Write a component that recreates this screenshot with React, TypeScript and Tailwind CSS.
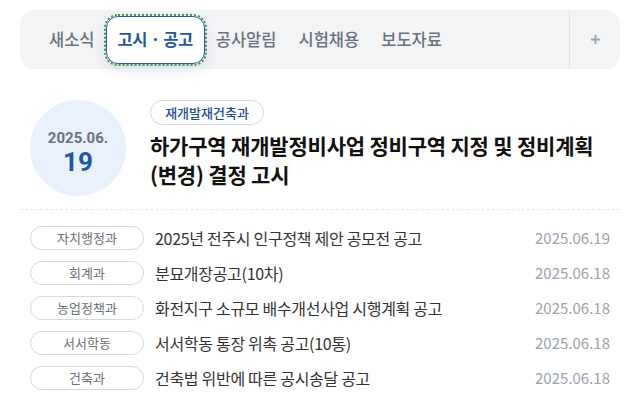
import { Plus } from "lucide-react";

const tabs = ["새소식", "고시 · 공고", "공사알림", "시험채용", "보도자료"];

const rows = [
  { dept: "자치행정과", title: "2025년 전주시 인구정책 제안 공모전 공고", date: "2025.06.19" },
  { dept: "회계과", title: "분묘개장공고(10차)", date: "2025.06.18" },
  { dept: "농업정책과", title: "화전지구 소규모 배수개선사업 시행계획 공고", date: "2025.06.18" },
  { dept: "서서학동", title: "서서학동 통장 위촉 공고(10통)", date: "2025.06.18" },
  { dept: "건축과", title: "건축법 위반에 따른 공시송달 공고", date: "2025.06.18" },
];

export default function App() {
  return (
    <div
      className="w-[630px] h-[406px] bg-white pl-5 pr-[10px] pt-[10px] overflow-hidden"
      style={{ fontFamily: '"Noto Sans CJK KR", "Noto Sans", sans-serif' }}
    >
      {/* tab bar */}
      <div className="flex items-center h-[59px] bg-[#f3f4f6] rounded-[14px] pl-[18px]">
        <div className="flex flex-1 items-center">
          {tabs.map((t, i) =>
            i === 1 ? (
              <button
                key={t}
                className="h-12 px-[11px] rounded-xl bg-white border border-[#2a5ca8] outline-2 outline-dotted outline-[#3d9a4f] outline-offset-0 shadow-[0_6px_14px_rgba(30,60,120,0.12)] text-[16.5px] font-bold text-[#1f56a6] tracking-[-0.4px]"
              >
                {t}
              </button>
            ) : (
              <button key={t} className="h-12 px-[11px] text-[16.5px] font-medium text-[#6b7280]">
                {t}
              </button>
            )
          )}
        </div>
        <div className="w-[51px] h-full border-l border-[#e2e4e8] flex items-center justify-center">
          <Plus size={13} strokeWidth={3.5} className="text-[#9ca3af]" />
        </div>
      </div>

      {/* featured */}
      <div className="flex gap-6 pl-[10px] pt-[31px] pb-[13px] border-b border-dashed border-[#e5e7eb]">
        <div
          className="w-24 h-24 shrink-0 rounded-full bg-[#e8f1fc] flex flex-col items-center justify-center pt-[9px]"
          style={{ fontFamily: "Roboto, sans-serif" }}
        >
          <span className="text-[15px] font-bold text-[#6b7280] leading-[18px]">2025.06.</span>
          <span className="text-[26px] font-bold text-[#1f56a6] leading-[30px]">19</span>
        </div>
        <div className="flex flex-col items-start">
          <span className="h-[25px] w-[114px] flex items-center justify-center rounded-full border border-[#d6d9de] text-[13px] font-medium text-[#1f4f96]">
            재개발재건축과
          </span>
          <p className="mt-[6px] text-[21px] font-semibold leading-[29px] text-[#111111] tracking-[-0.2px]">
            하가구역 재개발정비사업 정비구역 지정 및 정비계획 (변경) 결정 고시
          </p>
        </div>
      </div>

      {/* list */}
      <ul className="pt-4 flex flex-col gap-[11px]">
        {rows.map((r) => (
          <li key={r.dept} className="flex items-center h-6 pl-[10px] pr-[10px]">
            <span className="w-[114px] h-6 shrink-0 flex items-center justify-center rounded-full border border-[#d6d9de] text-[13px] text-[#6b7280]">
              {r.dept}
            </span>
            <span className="ml-[11px] flex-1 text-[16px] text-[#333333] tracking-[-0.3px]">{r.title}</span>
            <span className="text-[15px] text-[#9ca3af]">{r.date}</span>
          </li>
        ))}
      </ul>
    </div>
  );
}
